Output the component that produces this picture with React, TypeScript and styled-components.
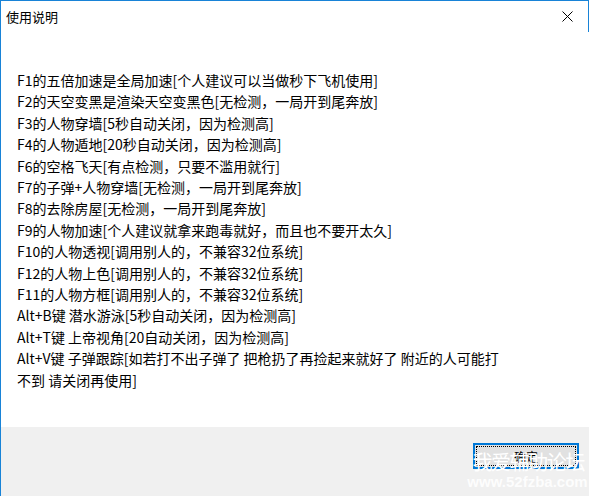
import React from "react";
import styled, { createGlobalStyle } from "styled-components";

const GlobalStyle = createGlobalStyle`
  html, body {
    margin: 0;
    padding: 0;
    background: #ffffff;
  }
  body {
    font-family: "Noto Sans CJK SC", "Noto Sans", sans-serif;
  }
`;

const Window = styled.div`
  position: relative;
  width: 589px;
  height: 496px;
  box-sizing: border-box;
  border-top: 1px solid #1883d7;
  border-left: 1px solid #1883d7;
  background: #ffffff;
  display: flex;
  flex-direction: column;
  overflow: hidden;
`;

const TitleBar = styled.div`
  height: 31px;
  display: flex;
  align-items: center;
  justify-content: space-between;
  padding-left: 5px;
  border-right: 1px solid #1883d7;
`;

const Title = styled.span`
  font-size: 13px;
  color: #000000;
`;

const CloseButton = styled.div`
  width: 46px;
  height: 31px;
  display: flex;
  align-items: center;
  justify-content: center;
  margin-right: -2px;
`;

const Body = styled.div`
  flex: 1;
  padding: 38px 0 0 16px;
`;

const Line = styled.div`
  font-size: 14px;
  line-height: 21.4px;
  color: #000000;
  white-space: nowrap;
`;

const Footer = styled.div`
  height: 69px;
  background: #f0f0f0;
  display: flex;
  justify-content: flex-end;
  align-items: flex-start;
  padding: 16px 10px 0 0;
  box-sizing: border-box;
`;

const OkButton = styled.div`
  position: relative;
  width: 106px;
  height: 26px;
  box-sizing: border-box;
  border: 2px solid #0078d7;
  background: #e1e1e1;
  display: flex;
  align-items: center;
  justify-content: center;
  font-size: 12px;
  color: #000000;

  &::after {
    content: "";
    position: absolute;
    inset: 1px;
    border: 1px dotted #000000;
  }
`;

const Watermark = styled.div`
  position: absolute;
  right: 6px;
  bottom: 5px;
  width: 111px;
  display: flex;
  flex-direction: column;
  align-items: center;
  color: #ffffff;
  pointer-events: none;
`;

const MarkTitle = styled.span`
  font-size: 20px;
  line-height: 22px;
  letter-spacing: -1.4px;
  margin-right: -1.4px;
`;

const MarkUrl = styled.span`
  font-family: "Liberation Sans", Arial, sans-serif;
  font-size: 15px;
  line-height: 18px;
  font-weight: bold;
  opacity: 0.9;
`;

const lines = [
  "F1的五倍加速是全局加速[个人建议可以当做秒下飞机使用]",
  "F2的天空变黑是渲染天空变黑色[无检测，一局开到尾奔放]",
  "F3的人物穿墙[5秒自动关闭，因为检测高]",
  "F4的人物遁地[20秒自动关闭，因为检测高]",
  "F6的空格飞天[有点检测，只要不滥用就行]",
  "F7的子弹+人物穿墙[无检测，一局开到尾奔放]",
  "F8的去除房屋[无检测，一局开到尾奔放]",
  "F9的人物加速[个人建议就拿来跑毒就好，而且也不要开太久]",
  "F10的人物透视[调用别人的，不兼容32位系统]",
  "F12的人物上色[调用别人的，不兼容32位系统]",
  "F11的人物方框[调用别人的，不兼容32位系统]",
  "Alt+B键 潜水游泳[5秒自动关闭，因为检测高]",
  "Alt+T键 上帝视角[20自动关闭，因为检测高]",
  "Alt+V键 子弹跟踪[如若打不出子弹了 把枪扔了再捡起来就好了 附近的人可能打",
  "不到 请关闭再使用]",
];

export default function App() {
  return (
    <>
      <GlobalStyle />
      <Window>
        <TitleBar>
          <Title>使用说明</Title>
          <CloseButton>
            <svg width="11" height="11" viewBox="0 0 11 11">
              <path d="M0.5 0.5 L10.5 10.5 M10.5 0.5 L0.5 10.5" stroke="#000" strokeWidth="1" fill="none" />
            </svg>
          </CloseButton>
        </TitleBar>
        <Body>
          {lines.map((l, i) => (
            <Line key={i}>{l}</Line>
          ))}
        </Body>
        <Footer>
          <OkButton>确定</OkButton>
        </Footer>
        <Watermark>
          <MarkTitle>我爱辅助论坛</MarkTitle>
          <MarkUrl>www.52fzba.com</MarkUrl>
        </Watermark>
      </Window>
    </>
  );
}
